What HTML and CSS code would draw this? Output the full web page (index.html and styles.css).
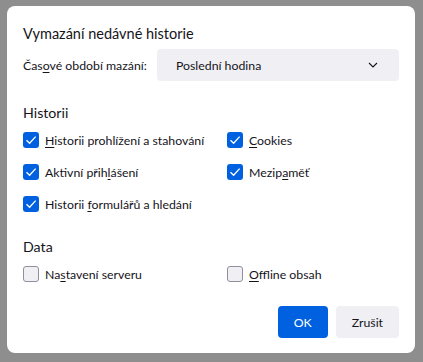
FILE: index.html
```html
<!DOCTYPE html>
<html lang="cs">
<head>
    <meta charset="UTF-8">
    <title>Vymazání nedávné historie</title>
    <link rel="stylesheet" href="styles.css">
</head>
<body>
    <div id="dialog">
        <div class="title">Vymazání nedávné historie</div>
        <div class="rangeRow">
            <div class="rangeLabel">Čas<u>o</u>vé období mazání:</div>
            <div class="select">
                <span>Poslední hodina</span>
                <svg class="chevron" width="10" height="6" viewBox="0 0 10 6">
                    <path d="M1 1 L5 5 L9 1" fill="none" stroke="#15141a" stroke-width="1.1"/>
                </svg>
            </div>
        </div>
        <div class="heading history">Historii</div>
        <div class="options">
            <div class="option"><span class="box checked"></span><span><u>H</u>istorii prohlížení a stahování</span></div>
            <div class="option"><span class="box checked"></span><span><u>C</u>ookies</span></div>
            <div class="option"><span class="box checked"></span><span>Aktivní přih<u>l</u>ášení</span></div>
            <div class="option"><span class="box checked"></span><span>Mezip<u>a</u>měť</span></div>
            <div class="option"><span class="box checked"></span><span>Historii <u>f</u>ormulářů a hledání</span></div>
        </div>
        <div class="heading data">Data</div>
        <div class="options dataOptions">
            <div class="option"><span class="box"></span><span>Na<u>s</u>tavení serveru</span></div>
            <div class="option"><span class="box"></span><span><u>O</u>ffline obsah</span></div>
        </div>
        <div class="actionRow">
            <div class="button primary">OK</div>
            <div class="button">Zrušit</div>
        </div>
    </div>
</body>
</html>
```

FILE: styles.css
```css
* {
    margin: 0;
    padding: 0;
    box-sizing: border-box;
}
body {
    background-color: #8e8e8e;
    color: #15141a;
    font-family: 'Lato', sans-serif;
    font-size: 12.3px;
}
#dialog {
    margin: 6px 0 0 7px;
    width: 408px;
    height: 347px;
    padding: 18px 16px 15px 16px;
    background-color: white;
    border-radius: 8px;
}
.title {
    font-size: 14.5px;
    line-height: 20px;
}
.rangeRow {
    display: flex;
    align-items: center;
    margin-top: 5px;
}
.rangeLabel {
    flex: none;
    width: 134px;
    white-space: nowrap;
}
.select {
    flex: 1;
    height: 32px;
    display: flex;
    align-items: center;
    justify-content: space-between;
    padding: 0 21px 0 19px;
    background-color: #f0f0f4;
    border-radius: 4px;
}
.heading {
    font-size: 14.2px;
    line-height: 20px;
}
.history {
    margin-top: 22px;
}
.data {
    margin-top: 21px;
}
.options {
    display: grid;
    grid-template-columns: 204px 1fr;
    row-gap: 8px;
    margin-top: 5px;
}
.option {
    display: flex;
    align-items: center;
    height: 24px;
    white-space: nowrap;
}
.box {
    flex: none;
    width: 16px;
    height: 16px;
    margin-right: 6px;
    border: 1px solid #8f8f9d;
    border-radius: 3px;
    background-color: #f0f0f4;
}
.box.checked {
    border: none;
    background-color: #0061e0;
    background-image: url("data:image/svg+xml,%3Csvg xmlns='http://www.w3.org/2000/svg' width='16' height='16' viewBox='0 0 16 16'%3E%3Cpath d='M3.5 8.2 L6.6 11.2 L12.6 4.6' fill='none' stroke='white' stroke-width='1.3'/%3E%3C/svg%3E");
}
u {
    text-underline-offset: 2px;
}
.actionRow {
    display: flex;
    justify-content: flex-end;
    margin-top: 20px;
}
.button {
    height: 32px;
    padding: 0 16px;
    margin-left: 8px;
    display: flex;
    align-items: center;
    background-color: #f0f0f4;
    border-radius: 4px;
}
.button.primary {
    background-color: #0061e0;
    color: white;
}
```
